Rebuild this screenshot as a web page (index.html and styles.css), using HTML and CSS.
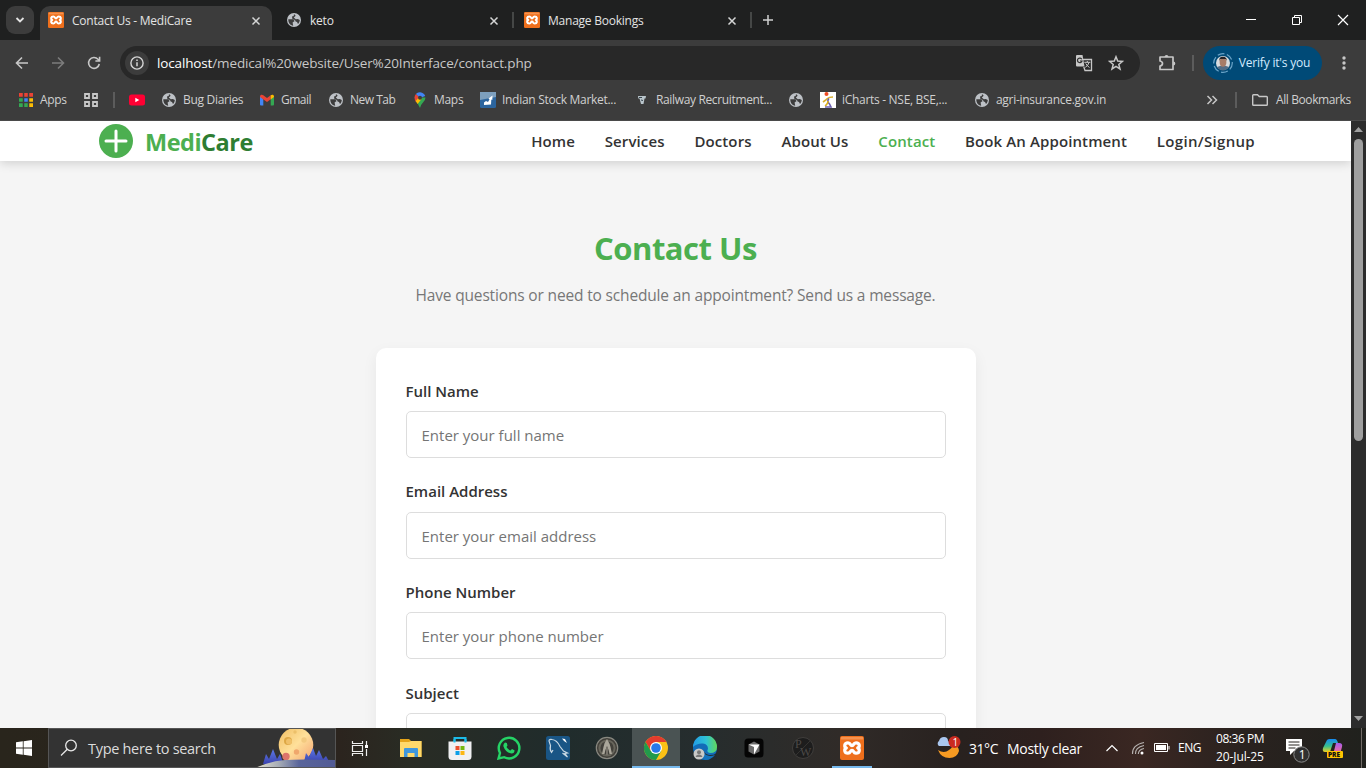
FILE: index.html
```html
<!DOCTYPE html>
<html lang="en">
<head>
<meta charset="utf-8">
<title>Contact Us - MediCare</title>
<link rel="stylesheet" href="styles.css">
</head>
<body>
<svg class="defs" width="0" height="0">
  <symbol id="xampp" viewBox="0 0 24 24">
    <rect width="24" height="24" rx="2" fill="#ee6f1c"/>
    <rect x="1" y="1" width="22" height="2.500" fill="#f5924f"/>
    <path d="M8 6.800C4 6.800 4 11 6.300 12 4 13 4 17.200 8 17.200 11 17.200 10 14.300 12 14.300S13 17.200 16 17.200C20 17.200 20 13 17.700 12 20 11 20 6.800 16 6.800 13 6.800 14 9.700 12 9.700S11 6.800 8 6.800Z" fill="none" stroke="#fff" stroke-width="3.200" stroke-linejoin="round"/>
  </symbol>
  <symbol id="globe" viewBox="0 0 16 16">
    <circle cx="8" cy="8" r="7" fill="#bdc1c6"/>
    <path d="M2.300 7.200 7 7.300 8.700 9.100 6.600 10.600 7.200 13.700C4.200 13.200 2.200 10.800 2.300 7.200ZM8 2.100 9.700 3.800 7.800 5.500 9.800 7.300 11.800 7 13.800 8C13.800 9.500 13 11 12 12L11 9.900 9.600 9.500 9 7.900 6.400 7 6 4.600 7.700 3.900Z" fill="#3c3c3c"/>
  </symbol>
  <symbol id="close" viewBox="0 0 10 10"><path d="M1.500 1.500 8.500 8.500M8.500 1.500 1.500 8.500" stroke="#d5d6d6" stroke-width="1.500"/></symbol>
</svg>

<div class="browser">
  <div class="tabstrip">
    <button class="tab-search"><svg width="10" height="8" viewBox="0 0 10 8"><path d="M1.500 2 5 5.500 8.500 2" fill="none" stroke="#e3e3e3" stroke-width="1.800"/></svg></button>
    <div class="tab tab-active"><svg class="i16"><use href="#xampp"/></svg><span class="tab-title">Contact Us - MediCare</span><svg class="x"><use href="#close"/></svg></div>
    <div class="tab tab-sep"><svg class="i16"><use href="#globe"/></svg><span class="tab-title">keto</span><svg class="x"><use href="#close"/></svg></div>
    <div class="tab tab-sep"><svg class="i16"><use href="#xampp"/></svg><span class="tab-title">Manage Bookings</span><svg class="x"><use href="#close"/></svg></div>
    <button class="tab-new"><svg width="12" height="12" viewBox="0 0 12 12"><path d="M6 1V11M1 6H11" stroke="#d0d0d0" stroke-width="1.500"/></svg></button>
    <div class="window-buttons">
      <svg viewBox="0 0 12 12"><path d="M1 5.500H11" stroke="#fff"/></svg>
      <svg viewBox="0 0 12 12"><path d="M1.500 3.500H8.500V10.500H1.500ZM3.500 3.500V1.500H10.500V8.500H8.500" fill="none" stroke="#fff"/></svg>
      <svg viewBox="0 0 12 12"><path d="M1 1 11 11M11 1 1 11" stroke="#fff" stroke-width="1.200"/></svg>
    </div>
  </div>

  <div class="toolbar">
    <svg class="nav-i" viewBox="0 0 14 14"><path d="M13 7H2M7 1.500 1.500 7 7 12.500" fill="none" stroke="#c7c7c7" stroke-width="1.600"/></svg>
    <svg class="nav-i" viewBox="0 0 14 14"><path d="M1 7H12M7 1.500 12.500 7 7 12.500" fill="none" stroke="#7c7c7c" stroke-width="1.600"/></svg>
    <svg class="nav-i" viewBox="0 0 14 14"><path d="M12.300 8A5.400 5.400 0 1 1 11 3.300L12.300 4.600M12.600 .8V5H8.400" fill="none" stroke="#c7c7c7" stroke-width="1.600"/></svg>
    <div class="omnibox">
      <span class="site-info"><svg width="14" height="14" viewBox="0 0 14 14"><circle cx="7" cy="7" r="6.100" fill="none" stroke="#d5d5d5" stroke-width="1.400"/><path d="M7 6.300V10.300M7 3.600V5" stroke="#d5d5d5" stroke-width="1.500"/></svg></span>
      <span class="url"><b>localhost</b>/medical%20website/User%20Interface/contact.php</span>
      <svg class="translate" width="18" height="18" viewBox="0 0 18 18"><path d="M2 1H7.500L9.500 12.500H2Q1 12.500 1 11.500V2Q1 1 2 1Z" fill="#c7c7c7"/><path d="M8 5.500H16.500V16.500H10L8.800 13" fill="none" stroke="#c7c7c7" stroke-width="1.300"/><path d="M6.800 5.200A2.300 2.300 0 1 0 7 7H5" fill="none" stroke="#303030" stroke-width="1.200"/><path d="M9.300 8.300H15.300M12.300 7V8.300M14 8.500Q13 12 10.300 13.300M10.800 9.500Q12 12 14.500 13.500" fill="none" stroke="#c7c7c7"/></svg>
      <svg width="16" height="16" viewBox="0 0 16 16"><path d="M8 1.800 9.700 6.100 14.400 6.400 10.800 9.400 12 14 8 11.400 4 14 5.200 9.400 1.600 6.400 6.300 6.100Z" fill="none" stroke="#c7c7c7" stroke-width="1.500"/></svg>
    </div>
    <svg class="puzzle" width="18" height="18" viewBox="0 0 18 18"><path d="M2 3H15V15.500H2V12Q4.500 11.500 4.500 9.500T2 7Z" fill="none" stroke="#c7c7c7" stroke-width="1.700" stroke-linejoin="round"/><path d="M6.500 3A2 2 0 0 1 10.500 3ZM15.300 7.500A2 2 0 0 1 15.300 11.500Z" fill="#c7c7c7"/></svg>
    <i class="divider"></i>
    <button class="verify">
      <svg width="20" height="20" viewBox="0 0 20 20"><circle cx="10" cy="10" r="9.300" fill="none" stroke="#6aa4c8" stroke-width="1.200" stroke-dasharray="7 2.500"/><circle cx="10" cy="10" r="7" fill="#d9dde0"/><path d="M4 14Q10 11 16 14A7 7 0 0 1 4 14Z" fill="#536d86"/><ellipse cx="10" cy="9" rx="3.400" ry="4.700" fill="#a77c68"/><path d="M6 8Q6 3.500 10 3.700T14 8L13 6H7Z" fill="#262326"/></svg>
      <span>Verify it's you</span>
    </button>
    <svg class="menu" width="4" height="16" viewBox="0 0 4 16"><circle cx="2" cy="3" r="1.700"/><circle cx="2" cy="8" r="1.700"/><circle cx="2" cy="13" r="1.700"/></svg>
  </div>

  <div class="bookmarks">
    <a><svg class="i16" viewBox="0 0 16 16"><path d="M1 1h4v4H1zM6 1h4v4H6zM11 1h4v4h-4z" fill="#ea4335"/><path d="M1 6h4v4H1zM1 11h4v4H1zM6 11h4v4H6z" fill="#34a853"/><path d="M6 6h4v4H6z" fill="#4285f4"/><path d="M11 6h4v4h-4zM11 11h4v4h-4z" fill="#fbbc04"/><path d="M5.500 0V16M10.500 0V16M0 5.500H16M0 10.500H16" stroke="#3c3c3c" stroke-width="1.500"/></svg><span class="apps">Apps</span></a>
    <a><svg class="i16" viewBox="0 0 16 16"><path d="M2 2H6V6H2ZM10 2H14V6H10ZM2 10H6V14H2ZM10 10H14V14H10Z" fill="none" stroke="#c7c7c7" stroke-width="1.800"/></svg></a>
    <i class="divider"></i>
    <a><svg class="i16" viewBox="0 0 16 16"><rect y="2.500" width="16" height="11" rx="2.500" fill="#f03"/><path d="M6.300 5.700V10.300L10.300 8Z" fill="#fff"/></svg></a>
    <a><svg class="i16"><use href="#globe"/></svg><span>Bug Diaries</span></a>
    <a><svg class="i16" viewBox="0 0 16 16"><path d="M1 4.500V12.500Q1 13.500 2 13.500H4.300V7Z" fill="#4285f4"/><path d="M15 4.500V12.500Q15 13.500 14 13.500H11.700V7Z" fill="#34a853"/><path d="M1 4.500C1 2.500 3 2.200 4.300 3.200L8 6 11.700 3.200V7.300L8 10.100 1 4.900Z" fill="#ea4335"/><path d="M11.700 3.200C13 2.200 15 2.500 15 4.500V5L11.700 7.500Z" fill="#fbbc04"/></svg><span class="gmail">Gmail</span></a>
    <a><svg class="i16"><use href="#globe"/></svg><span class="newtab">New Tab</span></a>
    <a><svg class="i16" viewBox="0 0 16 16"><path d="M2.500 5.500 8 16Q8.500 13 11 10.500T13.500 5.500Z" fill="#34a853"/><path d="M2.500 5.500A5.500 5.500 0 0 1 4 2L8 5.500 4 10Q2.500 8 2.500 5.500Z" fill="#ea4335"/><path d="M4 2A5.500 5.500 0 0 1 13.200 4L8 6Z" fill="#4285f4"/><path d="M3.600 9 8 4 9.500 7 5.600 12Z" fill="#fbbc04"/><circle cx="8" cy="5.700" r="2" fill="#3c3c3c"/></svg><span>Maps</span></a>
    <a><svg class="i16" viewBox="0 0 16 16"><rect width="16" height="16" rx="1.500" fill="#2c659e"/><path d="M0 0H16V5L0 8Z" fill="#7d9fbd"/><path d="M4 13V10.500L6 9 8 10 9.500 7.500 8.500 6.500 12.500 3.500 12.300 8 11.300 7.500 11 12.500Z" fill="#fff"/></svg><span>Indian Stock Market...</span></a>
    <a><svg class="i16" viewBox="0 0 16 16"><path d="M4 4H12L11.500 6.500H10.500L9.500 12H7L5.500 6.500H4.300Z" fill="#b9c5cb"/><path d="M5 5.500H8M7 8 9 8.500" stroke="#38464f"/></svg><span class="rail">Railway Recruitment...</span></a>
    <a><svg class="i16"><use href="#globe"/></svg></a>
    <a><svg class="i16" viewBox="0 0 16 16"><rect width="16" height="16" fill="#fff"/><circle cx="6.500" cy="2" r="2" fill="#ee4b24"/><path d="M3 10Q6 8 7.500 6.500T13 5" fill="none" stroke="#d9b02e" stroke-width="1.700"/><path d="M9 6.500Q6.500 9 9.500 12L11 15H5" fill="none" stroke="#6b5fb0" stroke-width="1.600"/><path d="M8 9Q8 12 5 14" fill="none" stroke="#ddb11d" stroke-width="1.500"/></svg><span>iCharts - NSE, BSE,...</span></a>
    <a><svg class="i16"><use href="#globe"/></svg><span>agri-insurance.gov.in</span></a>
    <a><svg width="12" height="16" viewBox="0 0 12 16"><path d="M1.500 4 5.500 8 1.500 12M6.500 4 10.500 8 6.500 12" fill="none" stroke="#c7c7c7" stroke-width="1.500"/></svg></a>
    <i class="divider"></i>
    <a class="all"><svg width="18" height="16" viewBox="0 0 18 16"><path d="M1.700 3.500Q1.700 2.700 2.500 2.700H6.500L8.300 4.500H15.500Q16.300 4.500 16.300 5.300V12.500Q16.300 13.300 15.500 13.300H2.500Q1.700 13.300 1.700 12.500Z" fill="none" stroke="#c7c7c7" stroke-width="1.400"/></svg><span>All Bookmarks</span></a>
  </div>
</div>

<div class="viewport">
  <div class="page">
    <header class="site-header">
      <a class="logo"><svg width="34" height="34" viewBox="0 0 34 34"><circle cx="17" cy="17" r="17" fill="#4caf50"/><path d="M17 7V27M7 17H27" stroke="#fff" stroke-width="3" stroke-linecap="round"/></svg><span>Medi<em>Care</em></span></a>
      <nav class="site-nav"><a>Home</a><a>Services</a><a>Doctors</a><a>About Us</a><a class="current">Contact</a><a>Book An Appointment</a><a class="login">Login/Signup</a></nav>
    </header>
    <main class="contact">
      <h1>Contact Us</h1>
      <p class="intro">Have questions or need to schedule an appointment? Send us a message.</p>
      <form class="card">
        <label for="name">Full Name</label><input id="name" placeholder="Enter your full name">
        <label for="email">Email Address</label><input id="email" placeholder="Enter your email address">
        <label for="phone">Phone Number</label><input id="phone" placeholder="Enter your phone number">
        <label for="subject">Subject</label><input id="subject">
      </form>
    </main>
  </div>
  <div class="scrollbar">
    <svg width="15" height="16" viewBox="0 0 15 16"><path d="M3 11 7.500 6 12 11Z" fill="#a0a0a0"/></svg>
    <div class="thumb"></div>
    <svg class="down" width="15" height="16" viewBox="0 0 15 16"><path d="M3 4 7.500 9 12 4Z" fill="#a0a0a0"/></svg>
  </div>
</div>

<div class="taskbar">
  <div class="start"><svg width="16" height="16" viewBox="0 0 16 16"><path d="M0 2.300 6.800 1.300V7.500H0ZM7.600 1.200 16 0V7.500H7.600ZM0 8.400H6.800V14.700L0 13.700ZM7.600 8.400H16V16L7.600 14.800Z" fill="#fff"/></svg></div>
  <div class="search">
    <svg width="18" height="18" viewBox="0 0 18 18"><circle cx="11" cy="6.500" r="5.300" fill="none" stroke="#e8e8e8" stroke-width="1.300"/><path d="M7.300 10.300 1 16.500" stroke="#e8e8e8" stroke-width="1.300"/></svg>
    <span>Type here to search</span>
    <svg class="moon" width="80" height="40" viewBox="0 0 80 40">
      <defs>
        <linearGradient id="mg" x2="1" y2="1"><stop offset="0" stop-color="#f0bd60"/><stop offset=".5" stop-color="#ffe09a"/><stop offset="1" stop-color="#f2a071"/></linearGradient>
        <linearGradient id="gr"><stop offset="0" stop-color="#e9e5cf"/><stop offset=".3" stop-color="#a5abb5"/><stop offset=".55" stop-color="#59659b"/><stop offset="1" stop-color="#525b95"/></linearGradient>
        <linearGradient id="tr" x2="0" y2="1"><stop offset="0" stop-color="#5d79e8"/><stop offset="1" stop-color="#3940ab"/></linearGradient>
      </defs>
      <circle cx="41" cy="17" r="17.300" fill="url(#mg)"/>
      <circle cx="33" cy="13" r="4" fill="#dda745"/><circle cx="34" cy="13.500" r="3" fill="#f0c068"/><circle cx="40" cy="4" r="1.700" fill="#ecc06a"/><circle cx="49" cy="12" r="2.700" fill="#f3ca80"/><circle cx="41.500" cy="24" r="2.700" fill="#f0a76c"/><circle cx="31" cy="28.500" r="3.700" fill="#dc746b"/>
      <path d="M8 36 11 26 14 31 18 21 22 31 25 26 29 37Z" fill="url(#tr)"/><path d="M49 34 51 25 54 29 58 20 61 28 64 22 68 31 71 28 75 35Z" fill="url(#tr)"/>
      <path d="M0 40Q16 33 30 32T80 32V40Z" fill="url(#gr)"/>
    </svg>
  </div>
  <div class="task-apps">
    <div class="task-view"><svg width="18" height="17" viewBox="0 0 18 17"><path d="M1.500 1V3.500H11.500V1M1.500 5.500H11.500V11.500H1.500ZM1.500 16V13.500H11.500V16M15.500 1V5M15.500 9V16" fill="none" stroke="#eee" stroke-width="1.200"/><path d="M14 5H17V8H14Z" fill="#fff"/></svg></div>
    <div class="app"><svg viewBox="0 0 24 24"><path d="M1 3H10L12 5H22.500V21H1Z" fill="#e5a419"/><path d="M1 6H10L12 5H22.500V21H1Z" fill="#ffd96b"/><path d="M5 13Q5 12 6 12H18Q19 12 19 13V21H15.500V17H8.500V21H5Z" fill="#3f97dd"/></svg></div>
    <div class="app"><svg viewBox="0 0 24 24"><path d="M6.500 7V2H17.500V7" fill="none" stroke="#1cbbe8" stroke-width="2"/><path d="M.5 5.500H23.500V20.500Q23.500 24 20 24H4Q.5 24 .5 20.500Z" fill="#f0f0f2"/><path d="M6.500 3V6.500M17.500 3V6.500" stroke="#1cbbe8" stroke-width="2"/><path d="M7.500 10H11.500V14H7.500Z" fill="#e94f2d"/><path d="M12.500 10H16.500V14H12.500Z" fill="#76b80f"/><path d="M7.500 15H11.500V19H7.500Z" fill="#0c9fe8"/><path d="M12.500 15H16.500V19H12.500Z" fill="#fcb713"/></svg></div>
    <div class="app"><svg viewBox="0 0 24 24"><path d="M1.500 22.500 3 17A10.300 10.300 0 1 1 7.200 21.200Z" fill="none" stroke="#25d366" stroke-width="2.400"/><path d="M8 6.500 9.800 7 10.500 9.500 9.500 11Q11 13.500 13.500 14.500L15 13 17.500 14.200Q17.500 17.500 14.500 17.500 8.500 16.500 6.300 10 6.300 7.500 8 6.500Z" fill="#25d366"/></svg></div>
    <div class="app"><svg viewBox="0 0 24 24"><rect width="24" height="24" rx="2.500" fill="#195585"/><path d="M7 14 5.500 16.500Q3.500 14 4.500 9.500L3 5Q3 3 6 3.500 11 4 14 10.500L17.500 15 21.500 17 19 17.500 21.500 21 16.500 17" fill="none" stroke="#c9d9e4" stroke-width="1.200"/><path d="M16 2.500 18 5 21 7 19 3Z" fill="#fff"/></svg></div>
    <div class="app"><svg viewBox="0 0 24 24"><circle cx="12" cy="12" r="10.700" fill="#42403a" stroke="#898880" stroke-width="1.200"/><circle cx="12" cy="12" r="7.600" fill="none" stroke="#68665c" stroke-width="2"/><path d="M12 3Q15 8 15.500 11L17 18H14.500Q13.500 13 12 10 10.500 13 9.500 18H7L8.500 11Q9 7 12 3Z" fill="#aaa69a"/><path d="M12 11V19" stroke="#77736a" stroke-width="2"/></svg></div>
    <div class="app app-current"><svg viewBox="0 0 24 24"><circle cx="12" cy="12" r="12" fill="#fbc116"/><path d="M1.600 6A12 12 0 0 1 22.400 6H12L6.800 15Z" fill="#e33b2e"/><path d="M1.600 6A12 12 0 0 0 12 24L17.200 15H6.800Z" fill="#229a4c"/><circle cx="12" cy="12" r="6" fill="#fff"/><circle cx="12" cy="12" r="4.800" fill="#2878eb"/></svg></div>
    <div class="app"><svg viewBox="0 0 24 24"><defs><linearGradient id="eg"><stop offset="0" stop-color="#229be5"/><stop offset=".55" stop-color="#2fc3d5"/><stop offset="1" stop-color="#62d85b"/></linearGradient></defs><circle cx="12" cy="12" r="12" fill="#126cb8"/><path d="M0 11A12 12 0 0 1 24 11Q24 17 17 17 13 16.500 15 13 15 8 10 7.500 4 7 0 11Z" fill="url(#eg)"/><path d="M9.500 13Q11 18 16 19 20 19.500 23 17.500L24 24H18Q9 21 9.500 13Z" fill="#232c31"/><path d="M10 15Q13 22 22 19Q18 24 12 24Q8 20 10 15Z" fill="#1373bd"/><circle cx="6" cy="18" r="5.500" fill="#c9c9c7"/><circle cx="6" cy="16.300" r="2" fill="#777"/><path d="M2.700 21Q3 18.500 6 18.500T9.300 21Z" fill="#777"/></svg></div>
    <div class="app"><svg viewBox="0 0 24 24"><rect x="2.500" y="2.500" width="19" height="19" rx="3.500" fill="#050505"/><path d="M6.500 8.500 12 5.500 17.500 8.500V15.500L12 18.500 6.500 15.500Z" fill="#6b6b6b"/><path d="M6.500 8.500H17.500L12 18.500V11Z" fill="#fff"/></svg></div>
    <div class="app"><svg viewBox="0 0 24 24"><circle cx="12" cy="12" r="10.500" fill="#1d1d1d" stroke="#403e3c"/><path d="M5 19 19 5" stroke="#343230"/><text x="4" y="12" class="pw">P</text><text x="9" y="20" class="pw">W</text></svg></div>
    <div class="app app-open"><svg><use href="#xampp"/></svg></div>
  </div>
  <div class="tray">
    <svg class="weather" width="25" height="24" viewBox="0 0 25 24"><path d="M2 14Q8 18 13 14T16.500 8Q23 10 23 15 21 22 13.500 22 5 22 2 14Z" fill="#f69a22"/><path d="M3 10A3 3 0 0 1 3 5Q4 1 8 1T12 5Q15 6 14 10Z" fill="#a9c6ee"/><circle cx="18.500" cy="6" r="6" fill="#ca2b20"/><text x="16.500" y="9.700" class="badge-text">1</text></svg>
    <span class="temp">31°C</span><span class="cond">Mostly clear</span>
    <svg width="12" height="8" viewBox="0 0 12 8"><path d="M.5 7 6 1.500 11.500 7" fill="none" stroke="#fff" stroke-width="1.200"/></svg>
    <svg width="14" height="14" viewBox="0 0 14 14"><path d="M1.500 13Q1 4 13 1.500M4.500 13Q4 6.500 13 4.500M7.300 13Q7.500 8.500 13 7.500" fill="none" stroke="#b5b1af" stroke-width="1.100"/><circle cx="11" cy="12" r="1.500" fill="#fff"/></svg>
    <svg width="16" height="10" viewBox="0 0 16 10"><path d="M.5 .5H13.500V8.500H.5ZM15 3V6.500" fill="none" stroke="#fff"/><path d="M2 2H12V7H2Z" fill="#fff"/></svg>
    <span class="lang">ENG</span>
    <div class="clock"><span>08:36 PM</span><span class="date">20-Jul-25</span></div>
    <svg class="notes" width="26" height="26" viewBox="0 0 26 26"><path d="M1 2H17V14H9L5 18V14H1Z" fill="#fff"/><path d="M3.500 5H14.500M3.500 8H14.500M3.500 11H10.500" stroke="#26221f"/><circle cx="16.500" cy="17.500" r="7.700" fill="#303030" stroke="#8a8a8a"/><text x="13.700" y="22" class="note-text">1</text></svg>
    <svg class="copilot" width="22" height="22" viewBox="0 0 22 22"><defs><linearGradient id="c1" x2="0" y2="1"><stop offset="0" stop-color="#168af2"/><stop offset=".55" stop-color="#36bf8e"/><stop offset="1" stop-color="#eed123"/></linearGradient><linearGradient id="c2" x2="0" y2="1"><stop offset="0" stop-color="#a65bed"/><stop offset="1" stop-color="#ff718c"/></linearGradient></defs><path d="M5 2Q6 1 8 1H13Q15 1 16 5H11L8 14H3Q0 14 1 10Z" fill="url(#c1)"/><path d="M14 5H17Q21 5 20 9L18 16H9L12 13Z" fill="url(#c2)"/><rect x="5" y="13" width="16" height="7" rx="1" fill="#ffc400"/><text x="6" y="19" class="pre">PRE</text></svg>
    <i class="show-desktop"></i>
  </div>
</div>
</body>
</html>
```

FILE: styles.css
```css
* { box-sizing: border-box; }
body { margin: 0; width: 1366px; height: 768px; overflow: hidden; display: flex; flex-direction: column; font-family: "Open Sans", "Noto Sans", sans-serif; font-size: 12px; color: #e3e3e3; }
svg { display: block; flex: none; }
button { border: 0; padding: 0; font: inherit; color: inherit; display: flex; align-items: center; justify-content: center; }
span { white-space: nowrap; }
.defs { position: absolute; }
.i16 { width: 16px; height: 16px; }

/* Browser frame */
.browser { flex: none; height: 121px; background: #3c3c3c; border-bottom: 1px solid #4a4a4a; }
.tabstrip { height: 40px; background: #1f2020; display: flex; }
.tab-search { width: 28px; height: 28px; margin: 6px; border-radius: 9px; background: #3c3c3c; }
.tab { width: 238px; height: 40px; display: flex; align-items: center; padding: 1px 17px 0 8px; }
.tab .i16 { margin-bottom: 1px; }
.tab-active { width: 232px; margin: 6px 6px 0 0; height: 34px; padding: 0 11px 5px 8px; border-radius: 10px 10px 0 0; background: #3c3c3c; }
.tab-title { flex: 1; margin-left: 8px; letter-spacing: -.23px; }
.tab-sep { background: linear-gradient(#454746, #454746) no-repeat 234px 12px / 2px 16px; }
.x { width: 10px; height: 10px; }
.tab-new { width: 28px; background: none; }
.window-buttons { display: grid; grid-template-columns: repeat(3, 46px); place-items: center; margin-left: auto; }
.window-buttons svg { width: 12px; height: 12px; }
.divider { display: block; width: 2px; height: 16px; background: #5c5c5c; }

.toolbar { height: 40px; padding-top: 6px; display: flex; align-items: center; }
.toolbar .nav-i { width: 14px; height: 14px; margin-left: 15px; margin-right: 7px; }
.nav-i + .nav-i { margin-left: 15px; }
.omnibox { width: 1020px; height: 34px; margin-left: 12px; border-radius: 17px; background: #282828; display: flex; align-items: center; padding: 0 16px 0 5px; }
.site-info { width: 24px; height: 24px; border-radius: 50%; background: #3c3c3c; display: grid; place-items: center; }
.url { flex: 1; margin-left: 8px; font-size: 13.5px; letter-spacing: -.14px; color: #c7c7c7; }
.url b { font-weight: 400; color: #fff; }
.translate { margin-right: 15px; }
.puzzle { margin: 0 16px 0 18px; }
.toolbar .divider { margin-right: 9px; }
.verify { width: 119px; height: 34px; padding: 0 2px 1px 0; border-radius: 17px; background: #004a77; color: #d3ebff; font-weight: 500; letter-spacing: -.2px; gap: 6px; }
.menu { margin-left: 20px; fill: #c7c7c7; }

.bookmarks { height: 40px; padding-left: 18px; display: grid; grid-template-columns: 65px 30px 16px 32px 98px 69px 84px 68px 154px 154px 32px 154px 232px 29px 16px 1fr; align-items: center; color: #d0d0d0; letter-spacing: -.3px; }
.bookmarks a { display: flex; align-items: center; gap: 6px; }
.bookmarks span { padding-bottom: 1px; }
.bookmarks .gmail, .bookmarks .newtab { letter-spacing: -.5px; }
.bookmarks .rail { letter-spacing: -.35px; }
.bookmarks .all { letter-spacing: -.4px; gap: 7px; }

/* Website */
.viewport { height: 607px; flex: none; display: flex; }
.page { width: 1351px; background: #f5f5f5; color: #333; overflow: hidden; display: flex; flex-direction: column; }
.site-header { height: 40px; flex: none; padding: 0 96px 0 99px; background: #fff; box-shadow: 0 2px 10px rgba(0, 0, 0, .16); display: flex; align-items: center; justify-content: space-between; }
.logo { display: flex; align-items: center; gap: 12px; font-size: 23.5px; font-weight: 700; letter-spacing: -.5px; color: #4caf50; }
.logo span { padding-top: 1px; }
.logo em { font-style: normal; color: #2e7d32; }
.site-nav { display: flex; gap: 29.800px; font-size: 15px; font-weight: 600; letter-spacing: .11px; padding-bottom: 1px; }
.site-nav .current { color: #4caf50; }
.site-nav .login { letter-spacing: .32px; }
.contact { padding-top: 66px; display: flex; flex-direction: column; align-items: center; }
.contact h1 { margin: 0; font-size: 31px; line-height: 42px; letter-spacing: -.48px; color: #4caf50; }
.intro { margin: 13px 0 40px; font-size: 15.5px; line-height: 26px; letter-spacing: -.16px; color: #777; }
.card { width: 600px; height: 600px; flex: none; padding: 30px; background: #fff; border-radius: 10px; box-shadow: 0 5px 15px rgba(0, 0, 0, .06); display: flex; flex-direction: column; }
.card label { font-size: 15px; font-weight: 600; line-height: 25.600px; padding-top: .5px; margin-bottom: 7px; }
.card input { height: 47px; flex: none; margin-bottom: 20.600px; padding: 1px 15px 0; border: 1px solid #ddd; border-radius: 5px; background: #fff; font: 15px "Open Sans", sans-serif; }
.card input::placeholder { color: #757575; opacity: 1; }
.scrollbar { width: 15px; background: #2c2c2c; display: flex; flex-direction: column; align-items: center; }
.thumb { width: 9px; height: 302px; margin-top: 2px; border-radius: 5px; background: #9f9f9f; }
.down { margin-top: auto; }

/* Desktop taskbar */
.taskbar { height: 40px; flex: none; display: flex; color: #fff; background: linear-gradient(90deg, #29251c 0, #2b241e 340px, #292c24 410px, #202c2c 560px, #262d2e 700px, #302b28 840px, #28211f 960px, #2e201e 1040px, #3a2722 1140px, #2a221f 1240px, #20211d 1366px); }
.start { width: 48px; display: grid; place-items: center; }
.search { width: 288px; background: #333; border: 1px solid #555; display: flex; align-items: center; padding-left: 11px; font-size: 14.500px; letter-spacing: -.3px; color: #dcdcdc; overflow: hidden; }
.search span { margin-left: 10px; flex: 1; }
.task-apps { display: flex; }
.task-view { width: 47px; display: grid; place-items: center; margin-right: 4px; }
.app { width: 48px; margin-right: 1px; display: grid; place-items: center; }
.app svg { width: 24px; height: 24px; }
.app-current { background: #4a5353; box-shadow: inset 0 -2px #76b9ed; }
.app-open { background: linear-gradient(#76b9ed, #76b9ed) no-repeat 4px 38px / 40px 2px; }
.pw { font: 12px "Liberation Serif", serif; fill: #4c4947; }
.tray { margin-left: auto; width: 430px; display: grid; grid-template-columns: 33px 38px 99px 25px 23px 24px 38px 69px 37px 38px 1fr; align-items: center; letter-spacing: -.45px; }
.temp, .cond { font-size: 14px; }
.cond { letter-spacing: -.29px; }
.lang { padding-bottom: 1px; }
.clock { display: flex; flex-direction: column; line-height: 18px; padding-bottom: 1px; }
.date { letter-spacing: -.1px; }
.notes { margin-top: 4px; }
.copilot { margin-top: 2px; }
.badge-text { font-size: 10px; fill: #fff; }
.note-text { font-size: 12px; fill: #fff; }
.pre { font-size: 6.500px; font-weight: 800; letter-spacing: 0; fill: #111; }
.show-desktop { width: 1px; height: 40px; background: #706a66; justify-self: end; margin-right: 4px; }
```
